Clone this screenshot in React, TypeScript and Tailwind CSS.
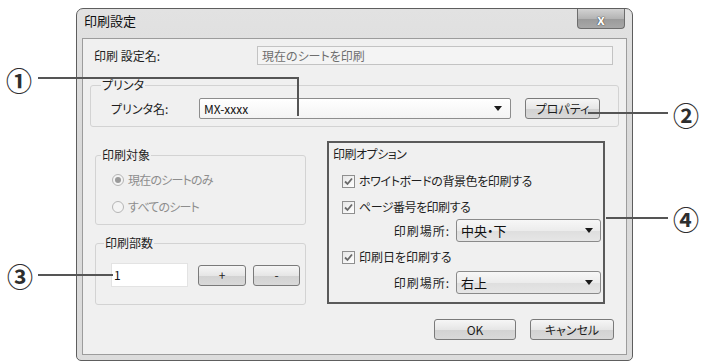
import React from "react";

const font = "font-['Noto_Sans_CJK_JP',sans-serif] [font-feature-settings:'palt']";

function Arrow() {
  return (
    <svg width="8" height="5" viewBox="0 0 8 5" className="shrink-0">
      <path d="M0 0H8L4 5Z" fill="#1a1a1a" />
    </svg>
  );
}

function CheckBox({ label, tr }: { label: string; tr: string }) {
  return (
    <div className="flex h-[16px] items-center gap-[4px]">
      <div className="flex h-[13px] w-[13px] items-center justify-center border border-[#8f8f8f] bg-[linear-gradient(135deg,#e6e6e6,#ffffff)]">
        <svg width="9" height="9" viewBox="0 0 9 9">
          <path d="M1 4.5L3.5 7L8 1.5" stroke="#6a6a6a" strokeWidth="1.8" fill="none" />
        </svg>
      </div>
      <span className={`text-[12px] leading-[16px] text-[#1e1e1e] ${tr}`}>{label}</span>
    </div>
  );
}

function Radio({ label, on }: { label: string; on?: boolean }) {
  return (
    <div className="flex h-[16px] items-center gap-[4px]">
      <div className="flex h-[12px] w-[12px] items-center justify-center rounded-full border border-[#b5b5b5] bg-[#f4f4f4]">
        {on && <div className="h-[6px] w-[6px] rounded-full bg-[#9a9a9a]" />}
      </div>
      <span className="text-[12px] leading-[16px] tracking-[-0.8px] text-[#8d8d8d]">{label}</span>
    </div>
  );
}

function Btn({ children, w }: { children: React.ReactNode; w: string }) {
  return (
    <div
      className={`flex h-[21px] items-center justify-center rounded-[3px] border border-[#7a7a7a] bg-[linear-gradient(to_bottom,#f6f6f6,#e6e6e6_50%,#d2d2d2_51%,#d9d9d9)] text-[12px] text-[#1e1e1e] ${w}`}
    >
      {children}
    </div>
  );
}

function Combo({ value, w }: { value: string; w: string }) {
  return (
    <div
      className={`flex h-[23px] items-center justify-between rounded-[3px] border border-[#8a8a8a] bg-[linear-gradient(to_bottom,#f7f7f7,#ececec_50%,#dedede_51%,#e6e6e6)] pl-[4px] pr-[7px] ${w}`}
    >
      <span className="text-[13px] text-[#111]">{value}</span>
      <Arrow />
    </div>
  );
}

function Num({ children, cls }: { children: React.ReactNode; cls: string }) {
  return (
    <span className={`absolute text-[26px] font-bold leading-[26px] text-[#2e2e2e] ${cls}`}>{children}</span>
  );
}

export default function App() {
  return (
    <div className={`relative h-[362px] w-[703px] overflow-hidden bg-white ${font}`}>
      {/* dialog window */}
      <div className="ml-[76px] mt-[8px] flex h-[353px] w-[557px] flex-col rounded-t-[7px] rounded-b-[5px] border border-[#5e5e5e] bg-[linear-gradient(to_bottom,#e2e2e2,#d9d9d9_40%,#dcdcdc)]">
        {/* title bar */}
        <div className="flex h-[29px] items-start">
          <span className="pl-[7px] pt-[3px] text-[13px] leading-[18px] text-[#111]">印刷設定</span>
          <div className="ml-auto mr-[7px] flex h-[20px] w-[48px] items-center justify-center rounded-b-[4px] border border-t-0 border-[#6d6d6d] bg-[linear-gradient(to_bottom,#d2d2d2,#b4b4b4_50%,#9a9a9a_51%,#a8a8a8)]">
            <span className="text-[14px] font-bold leading-none text-white [text-shadow:0_0_1px_#333,0_0_1px_#333]">x</span>
          </div>
        </div>
        {/* client area */}
        <div className="mx-[5px] flex h-[317px] flex-col border border-[#9c9c9c] bg-[#f0f0f0]">
          {/* setting name row */}
          <div className="mt-[7px] flex h-[19px] items-center">
            <span className="ml-[11px] w-[163px] text-[12px] text-[#1e1e1e]">印刷 設定名:</span>
            <div className="flex h-[19px] w-[356px] items-center border border-[#c3c3c3] bg-[#f4f4f4] pl-[4px] text-[12px] text-[#6e6e6e]">
              現在のシートを印刷
            </div>
          </div>
          {/* printer group */}
          <fieldset className="ml-[7px] mt-[12px] w-[529px] rounded-[3px] border border-[#d3d3d3] pb-[7px] pl-[20px] pt-[5px]">
            <legend className="ml-[-10px] px-[1px] text-[12px] leading-[16px] text-[#1e1e1e]">プリンタ</legend>
            <div className="flex h-[21px] items-center">
              <span className="w-[88px] text-[12px] text-[#1e1e1e]">プリンタ名:</span>
              <div className="flex h-[21px] w-[312px] items-center justify-between rounded-[2px] border border-[#8d8d8d] bg-[linear-gradient(to_bottom,#ffffff,#f3f3f3)] pl-[4px] pr-[8px]">
                <span className="text-[12px] text-[#111]">MX-xxxx</span>
                <Arrow />
              </div>
              <div className="ml-[14px]">
                <Btn w="w-[75px]">プロパティ</Btn>
              </div>
            </div>
          </fieldset>
          {/* lower area */}
          <div className="mt-[14px] flex">
            <div className="ml-[12px] flex w-[211px] flex-col">
              <fieldset className="mt-[6px] rounded-[3px] border border-[#d3d3d3] pb-[9px] pl-[16px] pt-[9px]">
                <legend className="ml-[-11px] px-[1px] text-[12px] leading-[16px] text-[#1e1e1e]">印刷対象</legend>
                <div className="flex flex-col gap-[11px]">
                  <Radio label="現在のシートのみ" on />
                  <Radio label="すべてのシート" />
                </div>
              </fieldset>
              <fieldset className="mt-[10px] rounded-[3px] border border-[#d3d3d3] pb-[17px] pl-[15px] pt-[12px]">
                <legend className="ml-[-7px] px-[1px] text-[12px] leading-[16px] text-[#1e1e1e]">印刷部数</legend>
                <div className="flex items-center">
                  <div className="flex h-[24px] w-[77px] items-center border border-[#e3e3e3] bg-white pl-[2px] text-[12px] text-[#111]">1</div>
                  <div className="ml-[10px]">
                    <Btn w="w-[48px]">+</Btn>
                  </div>
                  <div className="ml-[7px]">
                    <Btn w="w-[47px]">-</Btn>
                  </div>
                </div>
              </fieldset>
            </div>
            <div className="ml-[21px] flex h-[163px] w-[278px] flex-col border-2 border-[#5a5a5a] pl-[4px] pr-[2px]">
              <span className="mt-[3px] text-[12px] leading-[16px] tracking-[-0.5px] text-[#1e1e1e]">印刷オプション</span>
              <div className="ml-[9px] mt-[11px]">
                <CheckBox label="ホワイトボードの背景色を印刷する" tr="tracking-[-0.4px]" />
              </div>
              <div className="ml-[9px] mt-[10px]">
                <CheckBox label="ページ番号を印刷する" tr="tracking-[-0.5px]" />
              </div>
              <div className="mt-[4px] flex items-center justify-end gap-[6px]">
                <span className="text-[12px] tracking-[1px] text-[#1e1e1e]">印刷場所:</span>
                <Combo value="中央・下" w="w-[145px]" />
              </div>
              <div className="ml-[9px] mt-[7px]">
                <CheckBox label="印刷日を印刷する" tr="tracking-[0px]" />
              </div>
              <div className="mt-[6px] flex items-center justify-end gap-[6px]">
                <span className="text-[12px] tracking-[1px] text-[#1e1e1e]">印刷場所:</span>
                <Combo value="右上" w="w-[145px]" />
              </div>
            </div>
          </div>
          {/* buttons */}
          <div className="mr-[12px] mt-[14px] flex justify-end gap-[14px]">
            <Btn w="w-[82px]">OK</Btn>
            <Btn w="w-[84px]">キャンセル</Btn>
          </div>
        </div>
      </div>

      {/* callouts */}
      <Num cls="left-[6px] top-[67px]">①</Num>
      <div className="absolute left-[38px] top-[77px] h-[2px] w-[261px] bg-[#555]" />
      <div className="absolute left-[297px] top-[77px] h-[39px] w-[2px] bg-[#555]" />

      <Num cls="left-[673px] top-[102px]">②</Num>
      <div className="absolute left-[588px] top-[112px] h-[2px] w-[80px] bg-[#555]" />

      <Num cls="left-[7px] top-[263px]">③</Num>
      <div className="absolute left-[38px] top-[274px] h-[2px] w-[75px] bg-[#555]" />

      <Num cls="left-[673px] top-[206px]">④</Num>
      <div className="absolute left-[606px] top-[217px] h-[2px] w-[62px] bg-[#555]" />
    </div>
  );
}
